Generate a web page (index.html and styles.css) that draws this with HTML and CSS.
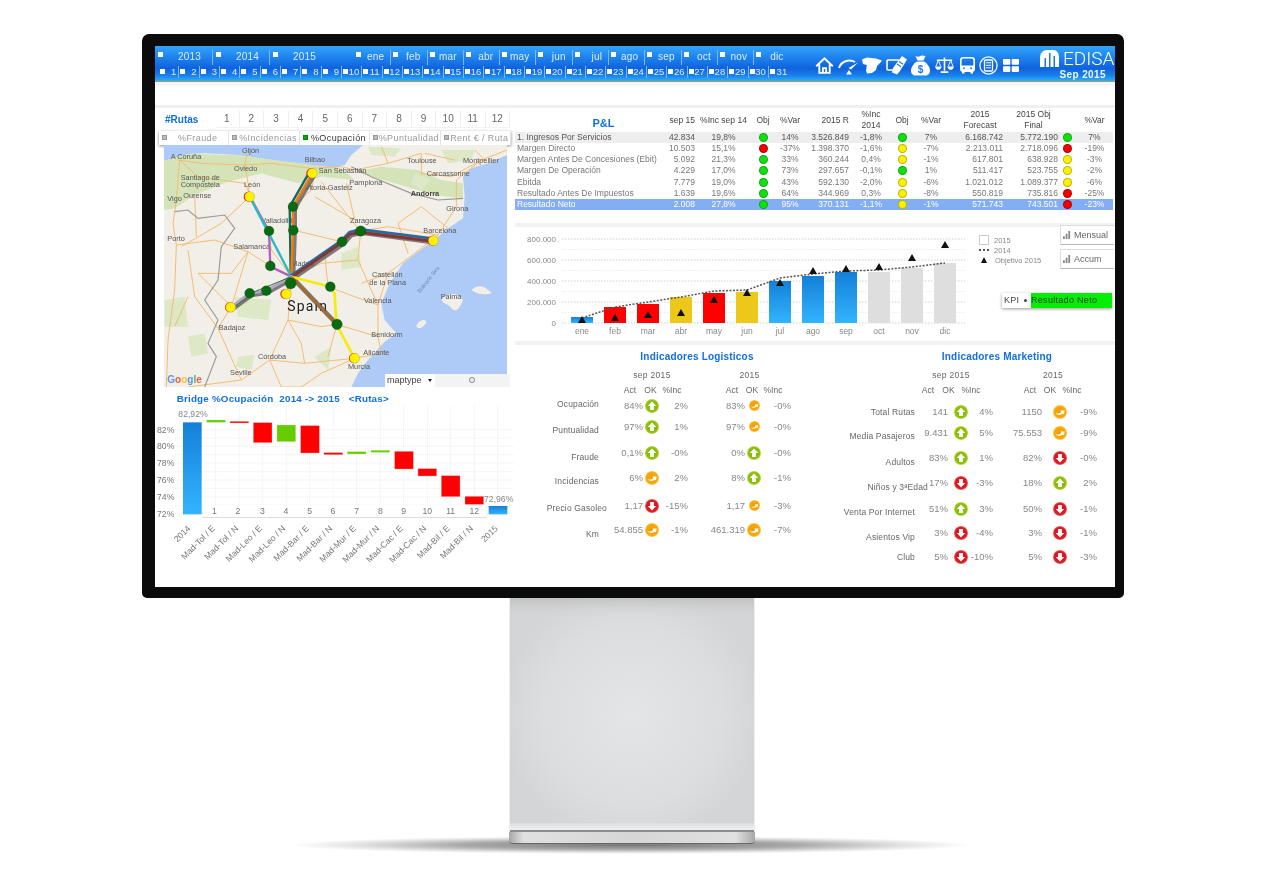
FILE: index.html
```html
<!DOCTYPE html>
<html lang="es">
<head>
<meta charset="utf-8">
<title>EDISA dashboard</title>
<link rel="stylesheet" href="styles.css">
</head>
<body>
<svg class="defs" width="0" height="0" aria-hidden="true">
  <defs>
    <linearGradient id="gBlue" x1="0" y1="0" x2="0" y2="1"><stop offset="0" stop-color="#1480d8"/><stop offset="1" stop-color="#33b4ff"/></linearGradient>
    <radialGradient id="gUp"><stop offset="0" stop-color="#7fb40a"/><stop offset=".8" stop-color="#8fc00f"/><stop offset="1" stop-color="#c6dc50"/></radialGradient>
    <radialGradient id="gDown"><stop offset="0" stop-color="#d0141c"/><stop offset=".8" stop-color="#dc1c22"/><stop offset="1" stop-color="#ee7070"/></radialGradient>
    <radialGradient id="gSide"><stop offset="0" stop-color="#f09a00"/><stop offset=".8" stop-color="#f8a808"/><stop offset="1" stop-color="#fcd060"/></radialGradient>
    <symbol id="up" viewBox="0 0 14 14"><circle cx="7" cy="7" r="7" fill="url(#gUp)"/><path d="M7 2.6 11.2 7H8.9v4H5.1V7H2.8Z" fill="#fff"/></symbol>
    <symbol id="down" viewBox="0 0 14 14"><circle cx="7" cy="7" r="7" fill="url(#gDown)"/><path d="M7 11.4 11.2 7H8.9V3H5.1v4H2.8Z" fill="#fff"/></symbol>
    <symbol id="side" viewBox="0 0 14 14"><circle cx="7" cy="7" r="7" fill="url(#gSide)"/><path d="M2.6 8.2C4.6 9 6.8 8.4 8.2 7L7.4 5.6 11.6 5.4 11 9.4 9.8 8.4C7.8 10.4 4.4 10.4 2.6 8.2Z" fill="#fff"/></symbol>
  </defs>
</svg>
<div class="stage">
  <div class="floor-shadow"></div>
  <div class="monitor">
    <div class="screen">
      <header class="hdr">
        <div class="slicers">
          <div class="row-top">
            <div class="years">
              <span class="ycell"><i></i>2013</span><span class="ycell"><i></i>2014</span><span class="ycell"><i></i>2015</span>
            </div>
            <div class="months">
              <span class="mcell"><i></i>ene</span><span class="mcell"><i></i>feb</span><span class="mcell"><i></i>mar</span><span class="mcell"><i></i>abr</span><span class="mcell"><i></i>may</span><span class="mcell"><i></i>jun</span><span class="mcell"><i></i>jul</span><span class="mcell"><i></i>ago</span><span class="mcell"><i></i>sep</span><span class="mcell"><i></i>oct</span><span class="mcell"><i></i>nov</span><span class="mcell"><i></i>dic</span>
            </div>
          </div>
          <div class="days">
            <span class="dcell"><i></i>1</span><span class="dcell"><i></i>2</span><span class="dcell"><i></i>3</span><span class="dcell"><i></i>4</span><span class="dcell"><i></i>5</span><span class="dcell"><i></i>6</span><span class="dcell"><i></i>7</span><span class="dcell"><i></i>8</span><span class="dcell"><i></i>9</span><span class="dcell"><i></i>10</span><span class="dcell"><i></i>11</span><span class="dcell"><i></i>12</span><span class="dcell"><i></i>13</span><span class="dcell"><i></i>14</span><span class="dcell"><i></i>15</span><span class="dcell"><i></i>16</span><span class="dcell"><i></i>17</span><span class="dcell"><i></i>18</span><span class="dcell"><i></i>19</span><span class="dcell"><i></i>20</span><span class="dcell"><i></i>21</span><span class="dcell"><i></i>22</span><span class="dcell"><i></i>23</span><span class="dcell"><i></i>24</span><span class="dcell"><i></i>25</span><span class="dcell"><i></i>26</span><span class="dcell"><i></i>27</span><span class="dcell"><i></i>28</span><span class="dcell"><i></i>29</span><span class="dcell"><i></i>30</span><span class="dcell"><i></i>31</span>
          </div>
        </div>
        <nav class="tools">
          <svg class="tool t-home" viewBox="0 0 20 18"><path d="M1.2 9.800 10 1.500l8.800 8.300M4.500 8v8.800h11V8M8.300 16.800v-5h3.400v5" fill="none" stroke="#fff" stroke-width="2"/></svg>
          <svg class="tool t-gauge" viewBox="0 0 21 18"><path d="M1 11C3 4.500 11 1.500 17 5" fill="none" stroke="#fff" stroke-width="2"/><path d="M10.500 11 20 5.500 13 12.500Z" fill="#fff"/><path d="M11 13l3 4.500H8Z" fill="#fff"/></svg>
          <svg class="tool t-spain" viewBox="0 0 20 17"><path d="M0 2.500 5 .5l9 1 6 2-2 2.500-3 3-1 4-4 3-5 .5-1-3 .8-5.500L1 7Z" fill="#fff"/></svg>
          <svg class="tool t-ticket" viewBox="0 0 22 20"><rect x="1" y="5" width="12" height="10" rx="1" fill="none" stroke="#fff" stroke-width="1.600"/><path d="M7 13 16 1l5 3.500-7 11.500-3 3.500-5-2Z" fill="#fff"/><path d="M11 9l4 2.800M13 6.500l4 2.800" stroke="#1c78e4" stroke-width="1.200"/></svg>
          <svg class="tool t-bag" viewBox="0 0 19 21"><path d="M4.500 1c2 1 3 1 5 0s3 0 5 0l-2 4.500H6.500Z" fill="#fff"/><path d="M6 6.500h7c3.500 2 6 6 6 9 0 3.500-2 5-4.500 5h-10C2 20.500 0 19 0 15.500c0-3 2.500-7 6-9Z" fill="#fff"/><text class="bag-s" x="9.500" y="18">$</text></svg>
          <svg class="tool t-scale" viewBox="0 0 20 18"><path d="M10 1v14M6 16.500h8M2 4h16" stroke="#fff" stroke-width="1.700" fill="none"/><path d="M0 10.500h7C6.500 13 5 14 3.500 14S.5 13 0 10.500ZM13 10.500h7C19.500 13 18 14 16.500 14S13.500 13 13 10.500Z" fill="#fff"/><path d="M3.500 4 1 10.500M3.500 4 6 10.500M16.500 4 14 10.500M16.500 4 19 10.500" stroke="#fff" fill="none"/></svg>
          <svg class="tool t-bus" viewBox="0 0 15 17"><rect x=".8" y=".8" width="13.400" height="13.400" rx="2.500" fill="none" stroke="#fff" stroke-width="1.600"/><path d="M1 8.500h13V14H1Z" fill="#fff"/><rect x="2" y="14" width="2.500" height="2.500" fill="#fff"/><rect x="10.500" y="14" width="2.500" height="2.500" fill="#fff"/><circle cx="4" cy="11.300" r="1" fill="#1c78e4"/><circle cx="11" cy="11.300" r="1" fill="#1c78e4"/></svg>
          <svg class="tool t-doc" viewBox="0 0 19 19"><circle cx="9.500" cy="9.500" r="8.600" fill="none" stroke="#fff" stroke-width="1.300"/><rect x="5.500" y="4" width="8" height="11" rx="1" fill="none" stroke="#fff" stroke-width="1.300"/><path d="M7 6.800h5M7 9.300h5M7 11.800h5" stroke="#fff"/></svg>
          <svg class="tool t-grid" viewBox="0 0 16 13"><rect width="7.300" height="5.800" rx="1" fill="#fff"/><rect x="8.700" width="7.300" height="5.800" rx="1" fill="#fff"/><rect y="7.200" width="7.300" height="5.800" rx="1" fill="#fff"/><rect x="8.700" y="7.200" width="7.300" height="5.800" rx="1" fill="#fff"/></svg>
        </nav>
        <div class="brand">
          <div class="brand-top">
            <svg class="logo" viewBox="0 0 19 18">
              <path d="M0 8C0 3 3 0 7 0h6c4 0 6 3 6 8v9H0Z" fill="#fff"/>
              <path d="M4.500 17V8H6v9ZM9 17V3h1.500v14ZM13.500 17V6H15v11Z" fill="#1c78e4"/>
            </svg>
            <span class="logo-t">EDISA</span>
          </div>
          <div class="brand-date">Sep 2015</div>
        </div>
      </header>
      <div class="gap"></div>
      <main class="body">
        <section class="left">
          <div class="rutas">
            <b class="rutas-t">#Rutas</b>
            <div class="tabs"><span>1</span><span>2</span><span>3</span><span>4</span><span>5</span><span>6</span><span>7</span><span>8</span><span>9</span><span>10</span><span>11</span><span>12</span></div>
          </div>
          <div class="checks">
            <span class="chk"><i></i>%Fraude</span>
            <span class="chk"><i></i>%Incidencias</span>
            <span class="chk on"><i></i>%Ocupación</span>
            <span class="chk"><i></i>%Puntualidad</span>
            <span class="chk"><i></i>Rent € / Ruta</span>
          </div>
          <div class="map-box">
            <svg class="map" viewBox="28 15 1029 726">
              <rect x="28" y="15" width="1029" height="726" fill="#aecbf8"/>
              <path d="M28 62 60 55 100 42 150 40 250 45 350 60 450 72 520 88 570 75 590 45 625 15H1057V45L1000 70 950 85 925 110 930 170 925 235 880 265 850 290 790 335 745 370 705 430 680 490 690 540 725 580 690 605 640 660 610 700 590 741H28Z" fill="#f2efe8"/>
              <path d="M28 62 100 42 250 45 450 72 560 85 600 120 500 110 430 130 320 100 220 125 120 165 60 205 28 210Z" fill="#d5e4b8"/>
              <path d="M600 95 720 130 840 165 925 175 925 130 860 120 790 90 680 80Z" fill="#d5e4b8"/>
              <path d="M860 30 960 30 950 60 880 70ZM640 20 740 25 720 50 650 45ZM250 650 300 645 290 690 245 680ZM480 650 530 620 520 690ZM100 590 150 580 160 640 110 650ZM30 480 90 470 100 560 30 560ZM560 340 610 320 620 380 560 390ZM240 470 350 480 340 540 250 530ZM780 100 830 120 800 150 770 130Z" fill="#dce8c6"/>
              <path d="M950 450C975 430 990 440 1012 460 990 465 970 465 950 450ZM860 480C880 455 910 455 925 480 915 505 905 520 890 505 880 490 870 495 860 480ZM785 560C790 540 810 535 815 545 810 560 795 570 785 560Z" fill="#f2efe8"/>
              <g class="roads">
                <path d="M75 60 130 110 200 120 270 130 290 170 340 270 350 330 410 410"/>
                <path d="M280 35 270 70 280 130 285 170M70 60 140 70 270 75 350 70 470 85 560 80 600 90"/>
                <path d="M65 180 70 120 75 60M65 315 55 250 65 180M65 315 60 450 40 600 35 741M65 315 180 300 280 335 347 378"/>
                <path d="M480 100 470 150 415 200 415 270 410 410M500 125 590 240 618 273M575 130 600 240"/>
                <path d="M618 273 700 260 850 285M850 285 905 200 905 120 980 60 1057 30M800 40 800 100 890 110 980 60M800 40 700 70 600 90"/>
                <path d="M410 410 520 440 600 470 670 495M670 495 700 400 780 340 850 285M618 273 610 360 670 495M670 495 670 590 680 640 600 655"/>
                <path d="M410 410 400 540 345 660 260 720M190 565 230 500 410 410M260 720 190 565M600 655 500 700 440 741M345 660 450 670 600 655M547 553 520 650M280 335 230 500M285 170 200 250 80 320M120 165 125 290M260 720 100 741M130 400 230 400 280 335M415 270 560 305M600 240 480 170M730 250 760 340M810 40 900 60"/>
                <path d="M100 470 60 560M100 330 120 470 190 565M230 500 130 400M400 540 500 560 547 553M345 660 380 741M450 670 440 610 400 540M520 440 510 340 560 305M610 360 500 370 410 410M700 400 620 430M545 553 670 590M880 265 800 200 730 250M960 30 1000 70M700 70 680 20M440 741 380 741"/>
              </g>
              <path class="border" d="M60 215 100 210 130 235 210 225 240 265 200 320 190 420 150 480 190 540 160 610 185 650 150 741"/>
              <path class="border" d="M590 80 650 110 770 160 850 180 925 175"/>
              <g class="pl">
                <text x="48" y="58">A Coruña</text><text x="262" y="38">Gijón</text><text x="238" y="94">Oviedo</text><text x="78" y="120">Santiago de</text><text x="78" y="142">Compostela</text><text x="38" y="184">Vigo</text><text x="86" y="174">Ourense</text><text x="268" y="142">León</text><text x="450" y="66">Bilbao</text><text x="492" y="98">San Sebastián</text><text x="450" y="150">Vitoria-Gasteiz</text><text x="584" y="136">Pamplona</text><text x="758" y="70">Toulouse</text><text x="816" y="108">Carcassonne</text><text x="925" y="68">Montpellier</text><text x="875" y="212">Girona</text><text x="586" y="248">Zaragoza</text><text x="806" y="278">Barcelona</text><text x="320" y="248">Valladolid</text><text x="38" y="302">Porto</text><text x="236" y="326">Salamanca</text><text x="410" y="378">Madrid</text><text x="652" y="410">Castellón</text><text x="644" y="434">de la Plana</text><text x="628" y="488">Valencia</text><text x="858" y="476">Palma</text><text x="192" y="570">Badajoz</text><text x="650" y="590">Benidorm</text><text x="626" y="644">Alicante</text><text x="310" y="656">Córdoba</text><text x="226" y="706">Seville</text><text x="580" y="686">Murcia</text>
              </g>
              <text class="pl-b" x="768" y="167">Andorra</text>
              <text class="pl-sea" transform="translate(796 460) rotate(-52)">Balearic Sea</text>
              <text class="pl-spain" x="398" y="512">Spain</text>
              <text class="pl-g" x="38" y="730"><tspan fill="#4285f4">G</tspan><tspan fill="#ea4335">o</tspan><tspan fill="#fbbc05">o</tspan><tspan fill="#4285f4">g</tspan><tspan fill="#34a853">l</tspan><tspan fill="#ea4335">e</tspan></text>
              <g fill="none" stroke-linecap="round" stroke-linejoin="round">
                <g class="r-shadow">
                  <path d="M415 412 420 270 420 205 478 105"/><path d="M415 415 568 310 590 285 622 278 842 307"/><path d="M415 415 340 457 290 465 233 507"/><path d="M415 415 552 558"/>
                </g>
                <path d="M408 410 405 200 462 100" stroke="#0e6b62" stroke-width="7"/>
                <path d="M410 410 415 270 415 200 473 100" stroke="#f07a10" stroke-width="8"/>
                <path d="M410 410 347 380 343 273 285 170" stroke="#b65fc0" stroke-width="7"/>
                <path d="M410 410 285 170" stroke="#27bcc4" stroke-width="7"/>
                <path d="M410 406 562 300 585 276 618 268 836 296" stroke="#2a6a9c" stroke-width="8"/>
                <path d="M410 412 562 307 585 283 618 277 836 304" stroke="#8c3030" stroke-width="8"/>
                <path d="M410 410 527 440 540 462 545 553 600 655" stroke="#f6ec0c" stroke-width="8"/>
                <path d="M410 410 547 553" stroke="#a86a28" stroke-width="7"/>
                <path d="M410 410 335 452 285 460 228 502" stroke="#b5a5c8" stroke-width="9"/>
                <path d="M410 410 300 455 228 508" stroke="#2a7a3a" stroke-width="3"/>
                <path d="M410 410 395 462" stroke="#c08030" stroke-width="4"/>
              </g>
              <g class="n-g">
                <circle cx="415" cy="200" r="15"/><circle cx="416" cy="271" r="15"/><circle cx="343" cy="273" r="15"/><circle cx="347" cy="378" r="15"/><circle cx="618" cy="273" r="16"/><circle cx="562" cy="305" r="15"/><circle cx="527" cy="440" r="15"/><circle cx="547" cy="553" r="16"/><circle cx="408" cy="430" r="17"/><circle cx="335" cy="452" r="15"/><circle cx="285" cy="460" r="15"/>
              </g>
              <g class="n-r">
                <circle cx="470" cy="100" r="15"/><circle cx="282" cy="170" r="15"/><circle cx="834" cy="302" r="15"/><circle cx="226" cy="502" r="15"/><circle cx="392" cy="462" r="15"/><circle cx="598" cy="655" r="15"/>
              </g>
              <g class="n-y">
                <circle cx="473" cy="100" r="15"/><circle cx="285" cy="170" r="15"/><circle cx="836" cy="302" r="15"/><circle cx="228" cy="502" r="15"/><circle cx="395" cy="462" r="15"/><circle cx="600" cy="655" r="15"/>
              </g>
            </svg>
            <div class="maptype"><span class="mt-sel">maptype<i></i></span><span class="mt-rest"><i></i></span></div>
          </div>
          <svg class="bridge" viewBox="0 0 1080 588">
            <text class="b-title" x="65" y="38" xml:space="preserve">Bridge %Ocupación  2014 -&gt; 2015   &lt;Rutas&gt;</text>
            <g class="b-grid">
              <path d="M60 122H1080M60 172H1080M60 222H1080M60 273H1080M60 324H1080M60 375H1080M60 147H1080M60 197H1080M60 248H1080M60 298H1080M60 350H1080"/>
              <path d="M112 50V380M182 50V380M253 50V380M323 50V380M394 50V380M464 50V380M535 50V380M605 50V380M676 50V380M746 50V380M817 50V380M887 50V380M958 50V380M1028 50V380"/>
            </g>
            <g class="b-y"><text x="58" y="131">82%</text><text x="58" y="181">80%</text><text x="58" y="231">78%</text><text x="58" y="282">76%</text><text x="58" y="333">74%</text><text x="58" y="384">72%</text></g>
            <rect x="84" y="100" width="56" height="276" fill="url(#gBlue)"/>
            <g class="b-pos"><rect x="155" y="93" width="56" height="7"/><rect x="366" y="108" width="56" height="50"/><rect x="577" y="188" width="56" height="7"/><rect x="648" y="184" width="56" height="6"/></g>
            <g class="b-neg"><rect x="225" y="97" width="56" height="5"/><rect x="295" y="101" width="56" height="60"/><rect x="437" y="110" width="56" height="82"/><rect x="507" y="191" width="56" height="6"/><rect x="719" y="187" width="56" height="53"/><rect x="789" y="239" width="56" height="22"/><rect x="859" y="260" width="56" height="63"/><rect x="930" y="322" width="56" height="25"/></g>
            <rect x="1001" y="351" width="56" height="25" fill="url(#gBlue)"/>
            <rect class="b-tabs" x="143" y="347" width="852" height="37"/>
            <g class="b-n"><text x="178" y="375">1</text><text x="249" y="375">2</text><text x="322" y="375">3</text><text x="393" y="375">4</text><text x="464" y="375">5</text><text x="534" y="375">6</text><text x="605" y="375">7</text><text x="676" y="375">8</text><text x="746" y="375">9</text><text x="817" y="375">10</text><text x="887" y="375">11</text><text x="958" y="375">12</text></g>
            <text class="b-top" x="70" y="85">82,92%</text>
            <text class="b-top" x="987" y="338">72,96%</text>
            <g class="b-x">
              <text transform="translate(108 420) rotate(-45)">2014</text><text transform="translate(182 420) rotate(-45)">Mad-Tol / E</text><text transform="translate(252 420) rotate(-45)">Mad-Tol / N</text><text transform="translate(323 420) rotate(-45)">Mad-Leo / E</text><text transform="translate(393 420) rotate(-45)">Mad-Leo / N</text><text transform="translate(464 420) rotate(-45)">Mad-Bar / E</text><text transform="translate(534 420) rotate(-45)">Mad-Bar / N</text><text transform="translate(605 420) rotate(-45)">Mad-Mur / E</text><text transform="translate(675 420) rotate(-45)">Mad-Mur / N</text><text transform="translate(746 420) rotate(-45)">Mad-Cac / E</text><text transform="translate(816 420) rotate(-45)">Mad-Cac / N</text><text transform="translate(886 420) rotate(-45)">Mad-Bil / E</text><text transform="translate(956 420) rotate(-45)">Mad-Bil / N</text><text transform="translate(1030 420) rotate(-45)">2015</text>
            </g>
          </svg>
        </section>
        <section class="right">
          <table class="pl-table">
            <colgroup><col class="c-l"><col class="c-a"><col class="c-b"><col class="c-c"><col class="c-d"><col class="c-e"><col class="c-f"><col class="c-g"><col class="c-h"><col class="c-i"><col class="c-j"><col class="c-k"><col class="c-m"></colgroup>
            <thead><tr><th class="pl-t">P&amp;L</th><th class="n">sep 15</th><th>%Inc sep 14</th><th>Obj</th><th>%Var</th><th class="n">2015 R</th><th>%Inc<br>2014</th><th>Obj</th><th>%Var</th><th class="n fc">2015<br>Forecast</th><th class="n fn">2015 Obj<br>Final</th><th></th><th>%Var</th></tr></thead>
            <tbody>
              <tr class="first"><td class="l">1. Ingresos Por Servicios</td><td class="n">42.834</td><td>19,8%</td><td><i class="dot g"></i></td><td>14%</td><td class="n">3.526.849</td><td>-1,8%</td><td><i class="dot g"></i></td><td>7%</td><td class="n">6.168.742</td><td class="n">5.772.190</td><td><i class="dot g"></i></td><td>7%</td></tr>
              <tr><td class="l">Margen Directo</td><td class="n">10.503</td><td>15,1%</td><td><i class="dot r"></i></td><td>-37%</td><td class="n">1.398.370</td><td>-1,6%</td><td><i class="dot y"></i></td><td>-7%</td><td class="n">2.213.011</td><td class="n">2.718.096</td><td><i class="dot r"></i></td><td>-19%</td></tr>
              <tr><td class="l">Margen Antes De Concesiones (Ebit)</td><td class="n">5.092</td><td>21,3%</td><td><i class="dot g"></i></td><td>33%</td><td class="n">360.244</td><td>0,4%</td><td><i class="dot y"></i></td><td>-1%</td><td class="n">617.801</td><td class="n">638.928</td><td><i class="dot y"></i></td><td>-3%</td></tr>
              <tr><td class="l">Margen De Operación</td><td class="n">4.229</td><td>17,0%</td><td><i class="dot g"></i></td><td>73%</td><td class="n">297.657</td><td>-0,1%</td><td><i class="dot g"></i></td><td>1%</td><td class="n">511.417</td><td class="n">523.755</td><td><i class="dot y"></i></td><td>-2%</td></tr>
              <tr><td class="l">Ebitda</td><td class="n">7.779</td><td>19,0%</td><td><i class="dot g"></i></td><td>43%</td><td class="n">592.130</td><td>-2,0%</td><td><i class="dot y"></i></td><td>-6%</td><td class="n">1.021.012</td><td class="n">1.089.377</td><td><i class="dot y"></i></td><td>-6%</td></tr>
              <tr><td class="l">Resultado Antes De Impuestos</td><td class="n">1.639</td><td>19,6%</td><td><i class="dot g"></i></td><td>64%</td><td class="n">344.969</td><td>0,3%</td><td><i class="dot y"></i></td><td>-8%</td><td class="n">550.819</td><td class="n">735.816</td><td><i class="dot r"></i></td><td>-25%</td></tr>
              <tr class="total"><td class="l">Resultado Neto</td><td class="n">2.008</td><td>27,8%</td><td><i class="dot g"></i></td><td>95%</td><td class="n">370.131</td><td>-1,1%</td><td><i class="dot y"></i></td><td>-1%</td><td class="n">571.743</td><td class="n">743.501</td><td><i class="dot r"></i></td><td>-23%</td></tr>
            </tbody>
          </table>
          <div class="chart-row">
            <svg class="bars" viewBox="515 227 460 114">
              <g class="v-grid">
                <path d="M562 239H965M562 260H965M562 281H965M562 302H965M562 323H965"/>
                <path class="minor" d="M562 249.500H965M562 270.500H965M562 291.500H965M562 312.500H965"/>
              </g>
              <g class="v-y"><text x="556" y="242">800.000</text><text x="556" y="263">600.000</text><text x="556" y="284">400.000</text><text x="556" y="305">200.000</text><text x="556" y="326">0</text></g>
              <rect x="571" y="317" width="22" height="6" fill="url(#gBlue)"/>
              <g fill="#f00"><rect x="604" y="307" width="22" height="16"/><rect x="637" y="304" width="22" height="19"/><rect x="703" y="293" width="22" height="30"/></g>
              <g fill="#eec71b"><rect x="670" y="297" width="22" height="26"/><rect x="736" y="292" width="22" height="31"/></g>
              <rect x="769" y="281" width="22" height="42" fill="url(#gBlue)"/><rect x="802" y="276" width="22" height="47" fill="url(#gBlue)"/><rect x="835" y="272" width="22" height="51" fill="url(#gBlue)"/>
              <g fill="#dedede"><rect x="868" y="272" width="22" height="51"/><rect x="901" y="268" width="22" height="55"/><rect x="934" y="263" width="22" height="60"/></g>
              <path class="dotline" d="M582 318 615 307 648 302 681 297 714 291 747 290 780 278 813 274 846 271 879 270 912 267 945 263"/>
              <g fill="#111">
                <path d="M582 316l4 7h-8ZM615 314l4 7h-8ZM648 311l4 7h-8ZM681 309l4 7h-8ZM714 296l4 7h-8ZM747 289l4 7h-8ZM780 279l4 7h-8ZM813 267l4 7h-8ZM846 265l4 7h-8ZM879 263l4 7h-8ZM912 254l4 7h-8ZM945 241l4 7h-8Z"/>
              </g>
              <g class="v-x"><text x="582" y="334">ene</text><text x="615" y="334">feb</text><text x="648" y="334">mar</text><text x="681" y="334">abr</text><text x="714" y="334">may</text><text x="747" y="334">jun</text><text x="780" y="334">jul</text><text x="813" y="334">ago</text><text x="846" y="334">sep</text><text x="879" y="334">oct</text><text x="912" y="334">nov</text><text x="945" y="334">dic</text></g>
            </svg>
            <div class="chart-side">
              <ul class="legend">
                <li><i class="lg-box"></i>2015</li>
                <li><i class="lg-dots"></i>2014</li>
                <li><i class="lg-tri"></i>Objetivo 2015</li>
              </ul>
              <div class="btns">
                <button class="btn"><svg class="btn-ic" viewBox="0 0 9 9"><path d="M0 9V6h2v3ZM3 9V3h2v6ZM6 9V0h2v9Z" fill="#888"/></svg>Mensual</button>
                <button class="btn"><svg class="btn-ic" viewBox="0 0 9 9"><path d="M0 9V6h2v3ZM3 9V3h2v6ZM6 9V0h2v9Z" fill="#888"/></svg>Accum</button>
              </div>
              <div class="kpi-sel"><span class="kpi-l">KPI<i></i></span><span class="kpi-v">Resultado Neto</span></div>
            </div>
          </div>
          <div class="kpis">
            <div class="kpi log">
              <h3 class="kpi-t">Indicadores Logisticos</h3>
              <div class="kpi-b">
                <div class="labels">
                  <span>Ocupación</span><span>Puntualidad</span><span>Fraude</span><span>Incidencias</span><span class="over">Precio Gasoleo</span><span>Km</span>
                </div>
                <div class="grp a">
                  <div class="g-t">sep 2015</div>
                  <div class="g-h"><span>Act</span><span>OK</span><span>%Inc</span></div>
                  <div class="vals">
                    <span>84%</span><svg class="ic"><use href="#up"/></svg><span>2%</span>
                    <span>97%</span><svg class="ic"><use href="#up"/></svg><span>1%</span>
                    <span>0,1%</span><svg class="ic"><use href="#up"/></svg><span>-0%</span>
                    <span>6%</span><svg class="ic"><use href="#side"/></svg><span>2%</span>
                    <span>1,17</span><svg class="ic"><use href="#down"/></svg><span>-15%</span>
                    <span>54.855</span><svg class="ic"><use href="#side"/></svg><span>-1%</span>
                  </div>
                </div>
                <div class="grp b">
                  <div class="g-t">2015</div>
                  <div class="g-h"><span>Act</span><span>OK</span><span>%Inc</span></div>
                  <div class="vals">
                    <span>83%</span><svg class="ic sm"><use href="#side"/></svg><span>-0%</span>
                    <span>97%</span><svg class="ic sm"><use href="#side"/></svg><span>-0%</span>
                    <span>0%</span><svg class="ic"><use href="#up"/></svg><span>-0%</span>
                    <span>8%</span><svg class="ic"><use href="#up"/></svg><span>-1%</span>
                    <span>1,17</span><svg class="ic sm"><use href="#side"/></svg><span>-3%</span>
                    <span>461.319</span><svg class="ic"><use href="#side"/></svg><span>-7%</span>
                  </div>
                </div>
              </div>
            </div>
            <div class="kpi mkt">
              <h3 class="kpi-t">Indicadores Marketing</h3>
              <div class="kpi-b">
                <div class="labels">
                  <span>Total Rutas</span><span>Media Pasajeros</span><span>Adultos</span><span class="over">Niños y 3ªEdad</span><span>Venta Por Internet</span><span>Asientos Vip</span><span>Club</span>
                </div>
                <div class="grp a">
                  <div class="g-t">sep 2015</div>
                  <div class="g-h"><span>Act</span><span>OK</span><span>%Inc</span></div>
                  <div class="vals">
                    <span>141</span><svg class="ic"><use href="#up"/></svg><span>4%</span>
                    <span>9.431</span><svg class="ic"><use href="#up"/></svg><span>5%</span>
                    <span>83%</span><svg class="ic"><use href="#up"/></svg><span>1%</span>
                    <span>17%</span><svg class="ic"><use href="#down"/></svg><span>-3%</span>
                    <span>51%</span><svg class="ic"><use href="#up"/></svg><span>3%</span>
                    <span>3%</span><svg class="ic"><use href="#down"/></svg><span>-4%</span>
                    <span>5%</span><svg class="ic"><use href="#down"/></svg><span>-10%</span>
                  </div>
                </div>
                <div class="grp b">
                  <div class="g-t">2015</div>
                  <div class="g-h"><span>Act</span><span>OK</span><span>%Inc</span></div>
                  <div class="vals">
                    <span>1150</span><svg class="ic"><use href="#side"/></svg><span>-9%</span>
                    <span>75.553</span><svg class="ic"><use href="#side"/></svg><span>-9%</span>
                    <span>82%</span><svg class="ic"><use href="#down"/></svg><span>-0%</span>
                    <span>18%</span><svg class="ic"><use href="#up"/></svg><span>2%</span>
                    <span>50%</span><svg class="ic"><use href="#down"/></svg><span>-1%</span>
                    <span>3%</span><svg class="ic"><use href="#down"/></svg><span>-1%</span>
                    <span>5%</span><svg class="ic"><use href="#down"/></svg><span>-3%</span>
                  </div>
                </div>
              </div>
            </div>
          </div>
        </section>
      </main>
    </div>
  </div>
  <div class="neck"><div class="neck-lip"></div></div>
  <div class="foot"></div>
</div>
</body>
</html>
```

FILE: styles.css
```css
* { box-sizing: border-box; }
html, body { margin: 0; padding: 0; background: #fff; }
body { width: 1275px; height: 889px; overflow: hidden; font-family: "Liberation Sans", Arial, sans-serif; color: #777; }
.defs { position: absolute; }
.stage { position: relative; width: 1275px; height: 889px; padding: 34px 0 0 142px; }

/* monitor */
.monitor { position: relative; z-index: 1; width: 982px; height: 564px; padding: 12px 9px 11px 13px; background: #0b0b0b; border-radius: 7px 7px 5px 5px; }
.screen { width: 960px; height: 541px; background: #fff; overflow: hidden; filter: blur(.35px); }
.neck { position: relative; z-index: 1; width: 246px; height: 234px; margin-left: 367px; background: radial-gradient(ellipse 130px 130px at 50% 50%, #e4e5e7 0, #dcddde 70%, #d4d5d6 100%); background-color: #d8d9da; box-shadow: inset 0 14px 14px -10px #bdbdbd; border-left: 1px solid #eee; border-right: 1px solid #eee; }
.neck-lip { position: absolute; left: 0; right: 0; bottom: 0; height: 9px; background: linear-gradient(#dedede, #f0f0f0); border-bottom: 2px solid #8c8c8c; }
.foot { position: relative; z-index: 1; width: 246px; height: 12px; margin-left: 367px; background: linear-gradient(90deg, #a8a8a8 0, #e0e0e0 6%, #d6d6d6 50%, #e0e0e0 92%, #a8a8a8 100%); border-radius: 0 0 4px 4px; border-bottom: 1px solid #666; }
.floor-shadow { position: absolute; left: 290px; top: 836px; width: 680px; height: 18px; background: radial-gradient(ellipse 50% 50% at 50% 50%, #777 0, #aaa 50%, #e2e2e2 80%, rgba(255,255,255,0) 100%); }

/* header */
.hdr { display: flex; height: 36px; background: linear-gradient(#35a4fc 0, #1f84ee 30%, #0f62de 62%, #1a80ea 82%, #2cacfc 96%, #a89a60 98%, #a89a60 100%); color: #dcecff; }
.slicers { width: 654px; font-size: 10px; letter-spacing: .2px; }
.row-top { display: flex; height: 19px; padding-top: 4px; }
.years { display: flex; width: 199px; }
.ycell { position: relative; width: 57px; padding-left: 23px; line-height: 14px; border-left: 1px solid #7ab8f4; }
.ycell:first-child { border-left: 0; }
.ycell i, .mcell i, .dcell i { position: absolute; width: 5px; height: 5px; background: #fff; }
.ycell i { left: 3px; top: 2px; }
.months { display: flex; }
.mcell { position: relative; width: 36.300px; text-align: right; padding-right: 6px; line-height: 14px; border-left: 1px solid #7ab8f4; }
.mcell:first-child { border-left: 0; }
.mcell i { left: 2px; top: 2px; }
.days { display: flex; height: 13px; padding: 1px 0 0 4px; }
.dcell { position: relative; width: 20.330px; text-align: right; padding-right: 2px; line-height: 12px; font-size: 9.500px; letter-spacing: 0; border-right: 1px solid #7ab8f4; }
.dcell:last-child { border-right: 0; }
.dcell i { left: 1px; top: 3px; }
.tools { display: flex; width: 231px; padding: 10px 0 0 6px; align-items: flex-start; }
.tool { display: block; flex: none; }
.t-home { width: 19px; height: 17px; margin: 1px 4px 0 0; }
.t-gauge { width: 21px; height: 18px; margin: 1px 3px 0 0; }
.t-spain { width: 20px; height: 17px; margin: 1px 4px 0 0; }
.t-ticket { width: 22px; height: 20px; margin: -1px 3px 0 0; }
.t-bag { width: 19px; height: 21px; margin: -1px 5px 0 0; }
.t-scale { width: 19px; height: 18px; margin: 0 6px 0 0; }
.t-bus { width: 15px; height: 17px; margin: 1px 4px 0 0; }
.t-doc { width: 19px; height: 19px; margin: 0 5px 0 0; }
.t-grid { width: 16px; height: 13px; margin: 3px 0 0 0; }
.bag-s { font-size: 10px; font-weight: 700; fill: #1c78e4; text-anchor: middle; }
.brand { width: 75px; padding-top: 4px; }
.brand-top { display: flex; align-items: flex-end; height: 18px; }
.logo { display: block; flex: none; width: 19px; height: 18px; margin-right: 4px; }
.logo-t { font-family: Roboto, "Liberation Sans", sans-serif; font-weight: 300; font-size: 19px; line-height: 18px; color: #fff; white-space: nowrap; }
.brand-date { margin-top: 1px; padding-right: 9px; text-align: right; font-size: 10px; font-weight: 700; letter-spacing: .4px; color: #f0f7ff; line-height: 12px; }

.gap { height: 26px; border-top: 4px solid #f7f7f7; border-bottom: 3px solid #f0f0f0; }
.body { display: flex; }
.left { width: 360px; }
.right { width: 600px; }

/* rutas */
.rutas { display: flex; height: 23px; align-items: center; }
.rutas-t { width: 60px; padding-left: 10px; font-size: 10px; color: #1170e0; }
.tabs { display: flex; margin-top: -1px; }
.tabs span { width: 24.600px; height: 16px; line-height: 16px; text-align: center; font-size: 10px; color: #666; border-right: 1px solid #eee; box-shadow: 0 1px 0 #f2f2f2; }
.checks { display: flex; width: 352px; height: 14px; margin-left: 4px; box-shadow: 0 1px 3px #888; font-size: 9px; letter-spacing: .4px; }
.chk { position: relative; display: block; width: 70.400px; line-height: 14px; text-align: center; padding-left: 8px; color: #999; border-right: 1px solid #e4e4e4; white-space: nowrap; }
.chk i { position: absolute; left: 3px; top: 4px; width: 5px; height: 5px; background: #bbb; border: 1px solid #999; }
.chk.on { color: #333; }
.chk.on i { background: #0a0; border-color: #080; }

/* map */
.map-box { position: relative; width: 343px; height: 242px; margin-left: 9px; }
.map { display: block; width: 343px; height: 242px; }
.roads path { fill: none; stroke: #f4bd72; stroke-width: 3; }
.border { fill: none; stroke: #9a9a9a; stroke-width: 3.500; }
.pl text { font-size: 22px; fill: #555; }
.pl-b { font-size: 22px; font-weight: 700; fill: #444; }
.pl-sea { font-size: 17px; fill: #6a8cc0; }
.pl-spain { font-size: 42px; letter-spacing: 3.500px; fill: #222; font-family: Roboto, "Liberation Sans", sans-serif; }
.pl-g { font-size: 30px; font-weight: 700; opacity: .85; }
.r-shadow { stroke: #555; stroke-width: 14; opacity: .75; }
.n-g circle { fill: #0a6a12; stroke: rgba(0,0,0,.4); stroke-width: 1; }
.n-r circle { fill: #f01818; }
.n-y circle { fill: #fff100; stroke: rgba(60,60,60,.5); stroke-width: 1; }
.maptype { position: absolute; left: 221px; bottom: 0; width: 125px; height: 13px; display: flex; font-size: 9px; color: #444; }
.mt-sel { position: relative; width: 50px; background: #fff; line-height: 13px; padding-left: 2px; }
.mt-sel i { position: absolute; right: 3px; top: 5px; width: 0; height: 0; border: 2px solid transparent; border-top: 3px solid #222; }
.mt-rest { position: relative; flex: 1; background: #f3f3f3; }
.mt-rest i { position: absolute; left: 34px; top: 3px; width: 6px; height: 6px; border-radius: 50%; border: 1px solid #888; }

/* bridge */
.bridge { display: block; width: 360px; height: 196px; margin-top: 2px; }
.b-title { font-size: 29.500px; font-weight: 700; fill: #1170e0; white-space: pre; letter-spacing: .6px; }
.b-grid path { fill: none; stroke: #e3e3e3; stroke-width: 2; stroke-dasharray: 3 3; }
.b-y text { font-size: 26px; fill: #777; text-anchor: end; }
.b-pos rect { fill: #66cc00; stroke: #c8e8a0; stroke-width: 1; }
.b-neg rect { fill: #f00; stroke: #ffb0b0; stroke-width: 1; }
.b-tabs { fill: #fff; filter: drop-shadow(0 2px 2px #ccc); }
.b-n text { font-size: 26px; fill: #777; text-anchor: middle; }
.b-top { font-size: 26px; fill: #888; }
.b-x text { font-size: 26px; fill: #777; text-anchor: end; }

/* P&L */
.pl-table { width: 598px; height: 102px; table-layout: fixed; border-collapse: collapse; font-size: 8.500px; color: #777; }
.c-l { width: 135px; } .c-a { width: 45px; } .c-b { width: 57px; } .c-c { width: 22px; } .c-d { width: 32px; } .c-e { width: 43px; } .c-f { width: 44px; } .c-g { width: 18px; } .c-h { width: 40px; } .c-i { width: 52px; } .c-j { width: 55px; } .c-k { width: 18px; } .c-m { width: 37px; }
.pl-table th { height: 24px; padding: 0; font-weight: 400; text-align: center; color: #444; line-height: 11px; vertical-align: middle; white-space: nowrap; }
.pl-table th.pl-t { font-size: 11px; font-weight: 700; color: #1170e0; padding-top: 6px; text-indent: 42px; }
.pl-table td { height: 11.100px; padding: 0; text-align: center; line-height: 11px; white-space: nowrap; }
.pl-table .n { text-align: right; }
.pl-table th.fc { text-align: center; padding-left: 6px; }
.pl-table th.fn { text-align: center; padding-left: 6px; }
.pl-table td.l { text-align: left; padding-left: 2px; }
.first td { background: #eee; color: #555; }
.total td { background: #84aef4; color: #fff; }
.dot { display: block; width: 9px; height: 9px; margin: 0 auto; border-radius: 50%; border: 1px solid rgba(0,0,0,.25); }
.dot.g { background: #10e010; }
.dot.r { background: #f00000; }
.dot.y { background: #fdf000; }

/* chart */
.chart-row { display: flex; height: 122px; border-top: 4px solid #f2f2f2; border-bottom: 4px solid #f2f2f2; margin-top: 13px; }
.bars { display: block; width: 460px; height: 114px; flex: none; }
.v-grid path { fill: none; stroke: #d0d0d0; stroke-dasharray: 1.500 1.500; }
.v-grid .minor { stroke: #ececec; }
.v-y text { font-size: 8px; fill: #888; text-anchor: end; }
.v-x text { font-size: 8.500px; fill: #888; text-anchor: middle; }
.dotline { fill: none; stroke: #555; stroke-width: 1.500; stroke-dasharray: 2 1.500; }
.chart-side { display: grid; grid-template-columns: 85px 55px; grid-template-rows: 62px auto; width: 140px; }
.legend { margin: 0; padding: 8px 0 0 4px; list-style: none; font-size: 7.500px; color: #888; }
.legend li { display: flex; align-items: center; height: 10px; white-space: nowrap; }
.legend i { display: block; flex: none; width: 10px; margin-right: 5px; }
.lg-box { height: 10px; border: 1px solid #ccc; }
.lg-dots { height: 0; border-top: 2px dotted #555; }
.lg-tri { width: 0 !important; height: 0; border: 3.500px solid transparent; border-top: 0; border-bottom: 6px solid #111; margin: 0 8px 0 2px !important; }
.btns { display: flex; flex-direction: column; gap: 4px; margin-top: -2px; }
.btn { display: flex; align-items: center; gap: 3px; width: 54px; height: 20px; padding: 0 0 0 2px; background: #fff; border: 0; border-top: 1px solid #ddd; border-bottom: 1px solid #bbb; border-left: 1px solid #ddd; font: 9px "Liberation Sans", Arial, sans-serif; color: #666; }
.btn-ic { width: 8px; height: 8px; flex: none; }
.kpi-sel { grid-column: 1 / -1; justify-self: end; display: flex; width: 110px; height: 15px; margin: 4px 3px 0 0; box-shadow: 0 1px 3px #999; font-size: 9px; letter-spacing: .3px; }
.kpi-l { position: relative; width: 29px; padding-left: 2px; line-height: 15px; color: #444; background: #fff; }
.kpi-l i { position: absolute; right: 4px; top: 6px; width: 3px; height: 3px; background: #444; border-radius: 50%; }
.kpi-v { flex: 1; line-height: 15px; background: #04ee04; color: #063a06; }

/* KPI */
.kpis { display: flex; }
.kpi { position: relative; width: 300px; height: 242px; }
.kpi-t { margin: 0; height: 22px; line-height: 24px; text-align: center; font-size: 10px; font-weight: 700; letter-spacing: .2px; color: #1170e0; padding-left: 64px; }
.kpi-b { display: flex; font-size: 9px; color: #888; }
.labels { display: grid; width: 84px; justify-items: end; color: #666; font-size: 8.500px; letter-spacing: .15px; }
.labels span { line-height: 18px; white-space: nowrap; }
.log .labels { padding-top: 28px; margin-right: 11px; grid-template-rows: 26px 27px 24px 27px 26px 18px; }
.log .labels .over { margin-right: -8px; }
.mkt .labels { width: 100px; padding-top: 36px; margin-right: 10px; grid-template-rows: 24px 26px 25px 25px 25px 20px 18px; }
.mkt .labels .over { margin-right: -13px; }
.g-t { height: 16px; line-height: 16px; text-align: center; font-size: 8.500px; letter-spacing: .3px; color: #666; }
.g-h { display: grid; height: 14px; line-height: 14px; font-size: 8.500px; text-align: center; color: #666; }
.vals { display: grid; justify-items: end; align-items: start; }
.vals span { line-height: 18px; white-space: nowrap; font-size: 9.500px; }
.vals .ic { display: block; justify-self: center; width: 14px; height: 14px; margin-top: 2px; }
.vals .ic.sm { width: 11px; height: 11px; margin-top: 3px; }
.log .grp { width: 78px; }
.log .a { margin-right: 20px; }
.log .a .g-t { width: 84px; }
.log .a .g-h { grid-template-columns: 20px 21px 22px; padding-left: 10px; }
.log .a .vals { grid-template-columns: 33px 18px 27px; }
.log .b { width: 83px; }
.log .b .g-h { grid-template-columns: 20px 20px 22px; padding-left: 14px; }
.log .b .vals { grid-template-columns: 37px 18px 28px; }
.log .vals { grid-template-rows: 21px 26px 25px 28px 24px 18px; }
.mkt .grp { width: 68px; }
.mkt .a { margin-right: 17px; }
.mkt .a .g-t { width: 52px; }
.mkt .a .g-h { grid-template-columns: 20px 21px 24px; margin-left: -7px; }
.mkt .a .vals { grid-template-columns: 23px 26px 19px; margin-top: 6px; }
.mkt .b { width: 87px; }
.mkt .b .g-t { width: 86px; }
.mkt .b .g-h { grid-template-columns: 20px 20px 24px; padding-left: 10px; }
.mkt .b .vals { grid-template-columns: 32px 36px 19px; margin-top: 6px; }
.mkt .vals { grid-template-rows: 21px 25px 25px 26px 24px 24px 18px; }
```
